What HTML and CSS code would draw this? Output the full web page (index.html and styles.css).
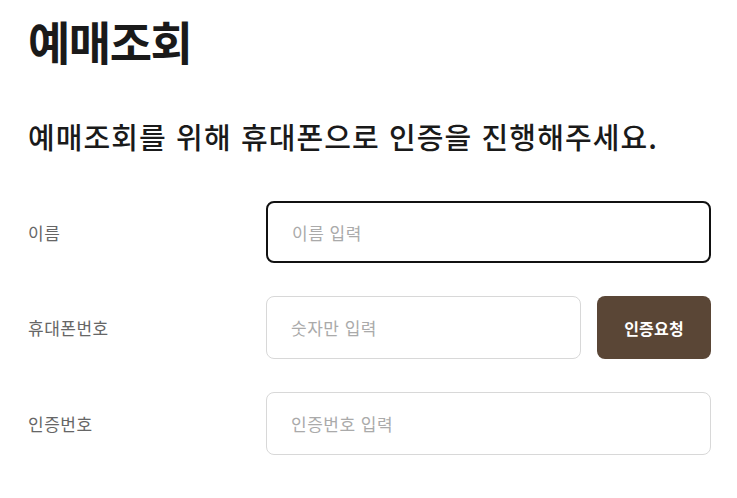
FILE: index.html
```html
<!DOCTYPE html>
<html lang="ko">
<head>
<meta charset="utf-8">
<link rel="stylesheet" href="styles.css">
</head>
<body>
<main class="page">
  <h1 class="title">예매조회</h1>
  <p class="subtitle">예매조회를 위해 휴대폰으로 인증을 진행해주세요.</p>
  <form class="form">
    <div class="row">
      <label class="label" for="name">이름</label>
      <div class="field">
        <input class="input input-focus" id="name" type="text" placeholder="이름 입력" autofocus>
      </div>
    </div>
    <div class="row">
      <label class="label" for="phone">휴대폰번호</label>
      <div class="field">
        <input class="input" id="phone" type="text" placeholder="숫자만 입력">
        <button class="btn" type="button">인증요청</button>
      </div>
    </div>
    <div class="row">
      <label class="label" for="code">인증번호</label>
      <div class="field">
        <input class="input" id="code" type="text" placeholder="인증번호 입력">
      </div>
    </div>
  </form>
</main>
</body>
</html>
```
FILE: styles.css
```css
* { box-sizing: border-box; }
html, body { margin: 0; padding: 0; background: #fff; }
body {
  font-family: "Noto Sans CJK KR", "Noto Sans", sans-serif;
  color: #1a1a1a;
}
.page {
  width: 737px;
  padding: 0 26px 0 28px;
}
.title {
  margin: 0;
  padding-top: 10px;
  font-size: 46px;
  line-height: 60px;
  font-weight: 700;
  letter-spacing: -1.5px;
  color: #1a1a1a;
}
.subtitle {
  margin: 46px 0 0;
  font-size: 29px;
  line-height: 40px;
  font-weight: 500;
  letter-spacing: 1.1px;
  color: #1a1a1a;
}
.form {
  margin-top: 45px;
  display: flex;
  flex-direction: column;
  gap: 33px;
}
.row {
  display: flex;
  align-items: center;
}
.label {
  width: 238px;
  flex: none;
  font-size: 17px;
  color: #666;
  letter-spacing: 0.5px;
}
.field {
  flex: 1;
  display: flex;
  gap: 16px;
}
.input {
  flex: 1;
  min-width: 0;
  height: 63px;
  border: 1px solid #d8d8d8;
  border-radius: 8px;
  padding: 0 24px;
  font-family: inherit;
  font-size: 17px;
  letter-spacing: 0.5px;
  color: #222;
  outline: none;
  background: #fff;
}
.input::placeholder { color: #aaa; }
.input-focus {
  border: 2px solid #111;
  height: 62px;
}
.btn {
  flex: none;
  width: 114px;
  height: 63px;
  border: 0;
  border-radius: 8px;
  background: #5a4636;
  color: #fff;
  font-family: inherit;
  font-size: 16px;
  font-weight: 700;
  letter-spacing: 0.2px;
}
```
